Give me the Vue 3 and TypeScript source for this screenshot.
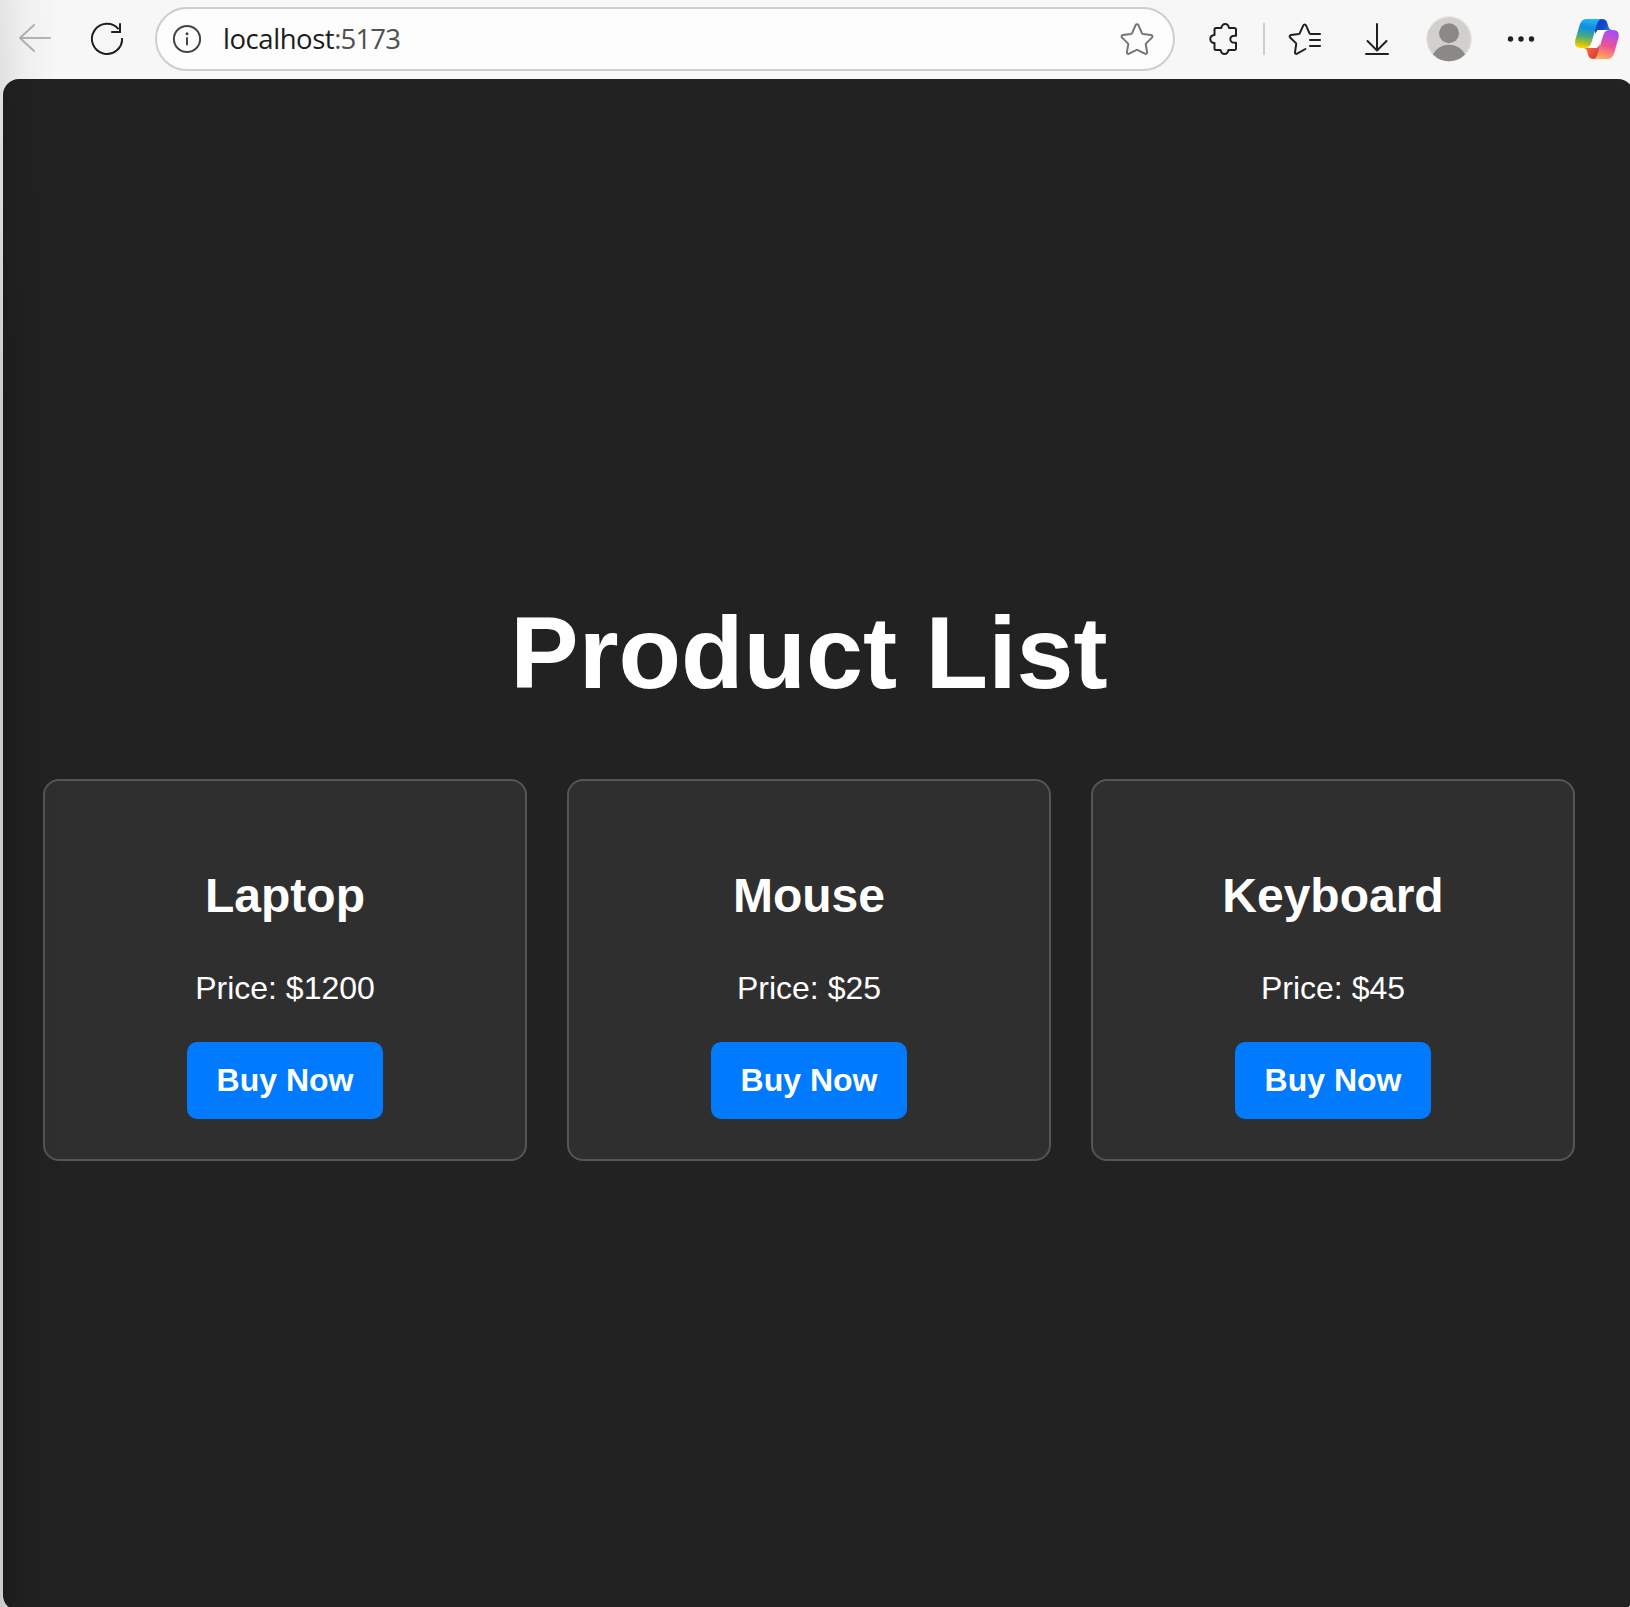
<script setup lang="ts">
interface Product {
  name: string
  price: number
}

const products: Product[] = [
  { name: 'Laptop', price: 1200 },
  { name: 'Mouse', price: 25 },
  { name: 'Keyboard', price: 45 },
]
</script>

<template>
  <div class="window">
    <header class="toolbar">
      <svg class="icon back" width="36" height="36" viewBox="0 0 36 36">
        <path d="M33 17H3M17 4 3 17l14 13" />
      </svg>
      <svg class="icon reload" width="36" height="36" viewBox="0 0 36 36">
        <path d="M33.1 17A15.100 15.100 0 1 1 29.600 8.200M31 2.200V11H22.200" />
      </svg>
      <div class="address">
        <svg class="icon info" width="30" height="30" viewBox="0 0 30 30">
          <circle cx="15" cy="15" r="13.1" />
          <path d="M15 14v6.500" />
          <circle class="dot" cx="15" cy="9.8" r="1.5" />
        </svg>
        <span class="url">localhost<span class="port">:5173</span></span>
        <svg class="icon star" width="36" height="36" viewBox="0 0 36 36">
          <path d="M16.6 4.1c.6-1.2 2.2-1.2 2.8 0l3.5 8.1c.2.5.7.8 1.2.9l8 .9c1.300.2 1.800 1.700.9 2.600l-5.700 5.500c-.4.4-.6.9-.5 1.500l1.300 7.600c.2 1.300-1.100 2.100-2.200 1.500l-7.100-3.600c-.5-.3-1.100-.3-1.600 0l-7.100 3.600c-1.100.6-2.400-.2-2.200-1.500l1.300-7.600c.1-.6-.1-1.100-.5-1.500L3 16.600c-.9-.9-.4-2.400.9-2.600l8-.9c.5-.1 1-.4 1.200-.9z" />
        </svg>
      </div>
      <svg class="icon puzzle" width="32" height="36" viewBox="0 0 32 36">
        <path d="M6.500 8.500a1.500 1.500 0 0 1 1.500-1.500H13.300C13.800 4.700 15 3 17.200 3S20.600 4.700 21 7h5.500a1.500 1.500 0 0 1 1.500 1.500V14.800C24.500 14.500 22.300 15.500 22.300 18.200S24.500 22 28 21.700V27.500a1.500 1.500 0 0 1-1.500 1.500H20.500C20 31.500 18.700 33 16.500 33S13 31.500 12.500 29H8a1.500 1.500 0 0 1-1.500-1.500V22C4 22 2.300 20.400 2.300 18S4 14.300 6.500 14z" />
      </svg>
      <span class="divider"></span>
      <svg class="icon favorites" width="36" height="36" viewBox="0 0 36 36">
        <path d="M33 13H23.500c-.5 0-.9-.3-1.100-.8L19 4.400c-.5-1.200-2.200-1.200-2.700 0l-3.500 7.700c-.2.5-.6.8-1.100.9l-7.700 1.100c-1.300.2-1.800 1.500-.9 2.400l5.600 5.400c.4.4.6.9.5 1.500L8 31.100c-.2 1.400 1 2.200 2.100 1.600L18.400 28M23 19H33M23 25H33" />
      </svg>
      <svg class="icon download" width="28" height="36" viewBox="0 0 28 36">
        <path d="M14 3V29M4.500 20 14 29.500 23.500 20M3 33H25" />
      </svg>
      <svg class="avatar" width="46" height="46" viewBox="0 0 46 46">
        <defs><clipPath id="avatar-clip"><circle cx="23" cy="23" r="22.300" /></clipPath></defs>
        <circle cx="23" cy="23" r="22.700" fill="#dededb" />
        <circle cx="23" cy="23" r="21.500" fill="#d2d0cd" />
        <g clip-path="url(#avatar-clip)" fill="#8b8885">
          <circle cx="23" cy="17.200" r="10" />
          <ellipse cx="23" cy="45" rx="17.500" ry="16.300" />
        </g>
      </svg>
      <svg class="more" width="28" height="8" viewBox="0 0 28 8">
        <circle cx="3.500" cy="4" r="2.700" />
        <circle cx="14" cy="4" r="2.700" />
        <circle cx="24.500" cy="4" r="2.700" />
      </svg>
      <svg class="copilot" width="46" height="42" viewBox="0 0 46 42">
        <defs>
          <linearGradient id="cp-left" x1=".55" y1="0" x2=".4" y2="1">
            <stop offset="0" stop-color="#28b5f5" /><stop offset=".3" stop-color="#108de2" />
            <stop offset=".6" stop-color="#43a887" /><stop offset=".82" stop-color="#a9bd29" /><stop offset="1" stop-color="#ffd000" />
          </linearGradient>
          <linearGradient id="cp-right" x1=".6" y1="0" x2=".35" y2="1">
            <stop offset="0" stop-color="#a74bf0" /><stop offset=".25" stop-color="#c451cf" />
            <stop offset=".53" stop-color="#f05293" /><stop offset="1" stop-color="#ffb154" />
          </linearGradient>
          <linearGradient id="cp-top" x1="0" y1=".2" x2="1" y2=".7">
            <stop offset="0" stop-color="#0a3dc4" /><stop offset=".5" stop-color="#1748cb" /><stop offset="1" stop-color="#2b8de9" />
          </linearGradient>
          <linearGradient id="cp-bottom" x1="0" y1="0" x2="1" y2=".7">
            <stop offset="0" stop-color="#ff9849" /><stop offset=".45" stop-color="#f35b3c" /><stop offset="1" stop-color="#d93845" />
          </linearGradient>
        </defs>
        <path fill="url(#cp-top)" d="M21 1H28c3 0 4.500 1.500 5.300 4l1 3.300c.7 2.400 1.700 3.700 4.200 3.700H27c-3 0-5 1.500-6 4z" />
        <path fill="url(#cp-bottom)" d="M24.500 41h-5c-3 0-4.500-1.500-5.300-4l-1-3.300C12.500 31.300 11.500 30 9 30h11c3 0 5-1.500 6-4z" />
        <path fill="#fff" d="M23.500 12H31L23 30H15z" />
        <path fill="url(#cp-left)" d="M13 1h16c-3.300 0-5 1.600-6 4.800L17.600 24C16.400 28 14.500 30 11 30H7C2 30 .2 27 1.300 22L5.500 7.500C6.900 3 9 1 13 1z" />
        <path fill="url(#cp-right)" d="M33 41H18c3.300 0 4.500-1.600 5.500-4.800L29 18c1.200-4 3-6 6.500-6H39c5 0 6.600 3 5.500 8l-4.200 14.500C39 39 37 41 33 41z" />
      </svg>
    </header>

    <div class="viewport">
      <main class="page">
        <h1>Product List</h1>
        <section class="products">
          <article v-for="product in products" :key="product.name" class="card">
            <h2>{{ product.name }}</h2>
            <p>Price: ${{ product.price }}</p>
            <button type="button">Buy Now</button>
          </article>
        </section>
      </main>
    </div>
    <div class="edge-shadow"></div>
  </div>
</template>

<style>
body {
  margin: 0;
  overflow: hidden;
}
</style>

<style scoped>
.window {
  position: relative;
  width: 1630px;
  height: 1607px;
  overflow: hidden;
  background: #f7f7f7;
  font-family: 'Liberation Sans', Arial, sans-serif;
}

.toolbar {
  display: flex;
  align-items: center;
  height: 78px;
  padding-left: 17px;
  box-sizing: border-box;
}

.toolbar > * {
  flex: none;
}

.icon {
  fill: none;
  stroke: #202020;
  stroke-width: 2;
  stroke-linecap: round;
  stroke-linejoin: round;
}

.back {
  stroke: #b5b5b5;
}

.reload {
  margin-left: 36px;
  stroke-linecap: butt;
  stroke-linejoin: miter;
}

.address {
  display: flex;
  align-items: center;
  width: 1020px;
  height: 64px;
  margin-left: 30px;
  padding: 0 18px 0 15px;
  box-sizing: border-box;
  border: 2px solid #cecece;
  border-radius: 32px;
  background: #fdfdfd;
}

.info {
  stroke: #444;
}

.info .dot {
  fill: #444;
  stroke: none;
}

.url {
  margin-left: 21px;
  font-family: 'Open Sans', 'Noto Sans', sans-serif;
  font-size: 27.5px;
  line-height: 36px;
  letter-spacing: -0.45px;
  color: #1c1c1c;
}

.port {
  letter-spacing: -0.85px;
  color: #505050;
}

.star {
  margin-left: auto;
  stroke: #767676;
}

.puzzle {
  margin-left: 33px;
}

.divider {
  width: 2px;
  height: 32px;
  margin-left: 23px;
  background: #cecece;
}

.favorites {
  margin-left: 22px;
}

.download {
  margin-left: 40px;
}

.avatar {
  margin-left: 35px;
}

.more {
  margin-left: 35px;
  fill: #202020;
}

.copilot {
  margin-left: 39px;
}

.viewport {
  display: flex;
  width: 1631px;
  height: 1532px;
  margin: 1px 0 0 3px;
  border-radius: 16px;
  background: #222;
  color: #fff;
}

.page {
  width: 1532px;
  padding: 518px 0 0 40px;
}

h1 {
  margin: 0;
  font-size: 102.4px;
  line-height: 112px;
  text-align: center;
}

.products {
  display: flex;
  gap: 40px;
  margin-top: 70px;
}

.card {
  display: flex;
  flex-direction: column;
  align-items: center;
  width: 484px;
  height: 382px;
  padding-top: 83px;
  box-sizing: border-box;
  border: 2px solid #555;
  border-radius: 16px;
  background: #2f2f2f;
}

h2 {
  margin: 0;
  font-size: 48px;
  line-height: 64px;
}

p {
  margin: 36px 0 0;
  font-size: 32px;
  line-height: 48px;
}

button {
  width: 196px;
  height: 77px;
  margin-top: 30px;
  padding: 0;
  border: 0;
  border-radius: 10px;
  background: #007bff;
  color: #fff;
  font: bold 32px/37px 'Liberation Sans', Arial, sans-serif;
}

/* soft shade cast over the left side of the window, fainter near the top */
.edge-shadow {
  position: absolute;
  inset: 0 auto 0 0;
  width: 58px;
  background: linear-gradient(to right, rgba(0, 0, 0, 0.18), rgba(0, 0, 0, 0.06) 45%, transparent);
  mask-image: linear-gradient(rgba(0, 0, 0, 0.4), rgba(0, 0, 0, 0.5) 80px, #000 400px);
  pointer-events: none;
}
</style>
